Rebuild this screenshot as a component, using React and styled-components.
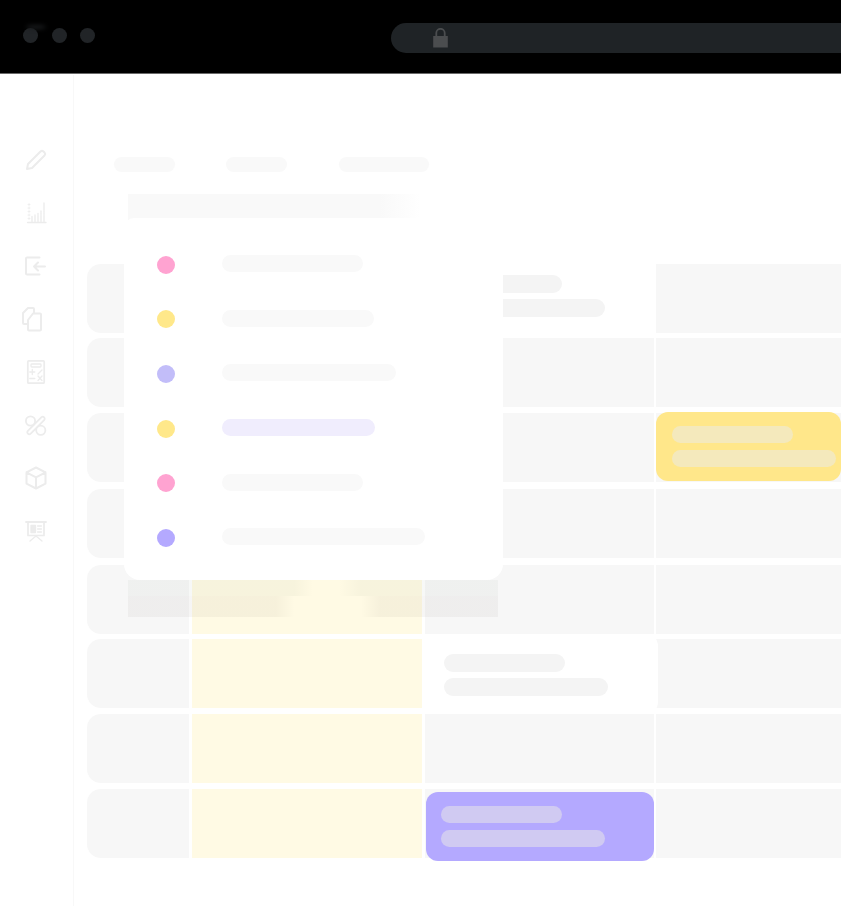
import styled, { createGlobalStyle } from 'styled-components';

const GlobalStyle = createGlobalStyle`
  html, body {
    margin: 0;
    padding: 0;
    background: #fff;
    font-family: 'Liberation Sans', Arial, sans-serif;
  }
`;

const rows = [
  [null, null, { tone: 'white', pos: 'row1' }, null],
  [null, null, null, null],
  [null, null, null, { tone: 'yellow', pos: 'yellow' }],
  [null, null, null, null],
  [null, null, null, null],
  [null, null, { tone: 'white', pos: 'row6' }, null],
  [null, null, null, null],
  [null, null, { tone: 'purple', pos: 'purple' }, null],
];

const menu = [
  { color: '#ffa3d1', width: 141 },
  { color: '#ffe88a', width: 152 },
  { color: '#c2bdf9', width: 174 },
  { color: '#ffe88a', width: 153, active: true },
  { color: '#ffa3d1', width: 141 },
  { color: '#b4a9ff', width: 203 },
];

export default function App() {
  return (
    <Page>
      <GlobalStyle />
      <Header>
        <Dots>
          <Dot />
          <Dot />
          <Dot />
        </Dots>
        <AddressBar>
          <svg width='15' height='20' viewBox='0 0 15 20'>
            <path
              d='M3.300 8.500V5a4.200 4.200 0 0 1 8.400 0v3.500'
              fill='none'
              stroke='#4b4d4f'
              strokeWidth='1.800'
            />
            <rect x='0.200' y='8' width='14.600' height='11.500' fill='#4b4d4f' />
          </svg>
        </AddressBar>
      </Header>
      <Body>
        <Sidebar>
          <Icon viewBox='0 0 24 24'>
            <path d='M3 21l1-5L16.500 3.500q1.500-1.300 3 0l1 1q1.300 1.500 0 3L8 20z' />
          </Icon>
          <Icon viewBox='0 0 24 24' $thin>
            <path d='M3.500 21.500h18.500M8 21v-5.500M11 21v-7M14 21v-8.500M17 21v-11M20 21V2' />
            <path d='M4 3.500h2M5 2.500v2M4 7h2M5 6v2M4 10.500h2M5 9.500v2M4 14h2M5 13v2M4 17.500h2M5 16.500v2' strokeWidth='.8' />
          </Icon>
          <Icon viewBox='0 0 24 24'>
            <path d='M15.500 3.500H3a1 1 0 0 0-1 1v15a1 1 0 0 0 1 1h12.500M21 12.500H10M14 8.500l-4 4 4 4' />
          </Icon>
          <Icon viewBox='0 0 24 24'>
            <path d='M4 17H0a1 1 0 0 1-1-1V6l5-5h5a1 1 0 0 1 1 1v4' />
            <path d='M5 23.500a1 1 0 0 1-1-1V13l5-6.500h7a1 1 0 0 1 1 1v15a1 1 0 0 1-1 1z' />
          </Icon>
          <Icon viewBox='0 0 24 24' $thin>
            <rect x='3.800' y='.8' width='16.400' height='22.400' rx='1' strokeWidth='1.700' />
            <rect x='7' y='4' width='10' height='3' rx='.8' />
            <path d='M5.800 12h5M8.300 9.500v5M14 14l4-4M5.800 18.500h5M14 16l4 4.500M18 16l-4 4.500' />
          </Icon>
          <Icon viewBox='0 0 24 24' $thin>
            <circle cx='6.500' cy='8' r='4.600' strokeWidth='1.800' />
            <circle cx='16.800' cy='17.300' r='4.600' strokeWidth='1.800' />
            <rect x='-11.500' y='-2' width='23' height='4' rx='2' transform='translate(12 12.500) rotate(-45)' strokeWidth='1.800' />
          </Icon>
          <Icon viewBox='0 0 24 24'>
            <path d='M12 1.500l9.500 4.800v11.400L12 22.500l-9.500-4.800V6.300zM2.500 6.300l9.500 5 9.500-5M12 11.300v11.200' />
          </Icon>
          <Icon viewBox='0 0 24 24' $thin>
            <path d='M2 3h20' strokeWidth='1.800' />
            <path d='M4 3v13.500h16V3' strokeWidth='1.700' />
            <rect x='7' y='6.500' width='4.500' height='7' fill='#ececec' />
            <path d='M13.500 7h4M13.500 10h4M13.500 13h4M12 17l-6 5M12 17l6 5' />
          </Icon>
        </Sidebar>
        <Main>
          <Tabs>
            <Tab $width={61} />
            <Tab $width={61} />
            <Tab $width={90} />
          </Tabs>
          <Schedule>
            {rows.map((row, r) =>
              row.map((card, c) => (
                <Cell key={`${r}-${c}`} $first={c === 0} $highlight={c === 1 && r > 3}>
                  {card && (
                    <EventCard $tone={card.tone} $pos={card.pos}>
                      <CardBar $tone={card.tone} $width={121} />
                      <CardBar $tone={card.tone} $width={164} />
                    </EventCard>
                  )}
                </Cell>
              ))
            )}
          </Schedule>
          <PopupShadow />
          <Popup>
            {menu.map((item, i) => (
              <PopupRow key={i}>
                <Marker $color={item.color} />
                <PopupBar $width={item.width} $active={item.active} />
              </PopupRow>
            ))}
          </Popup>
        </Main>
      </Body>
    </Page>
  );
}

const Page = styled.div`
  width: 841px;
  height: 906px;
  overflow: hidden;
  display: flex;
  flex-direction: column;
`;

const Header = styled.div`
  height: 74px;
  flex-shrink: 0;
  background: #000;
  border-bottom: 1px solid #6a6a6a;
  display: flex;
  align-items: flex-start;
  padding: 23px 0 0 23px;
  box-sizing: border-box;
`;

const Dots = styled.div`
  display: flex;
  gap: 13.5px;
  margin-top: 4.500px;
  width: 368px;
`;

const Dot = styled.div`
  position: relative;
  width: 15px;
  height: 15px;
  border-radius: 50%;
  background: #212427;
  &:first-child::before {
    content: '';
    position: absolute;
    left: 3px;
    top: -3px;
    width: 20px;
    height: 4px;
    border-radius: 50%;
    background: #1a1c1e;
    filter: blur(2px);
  }
`;

const AddressBar = styled.div`
  flex: 1;
  height: 30px;
  background: #1f2326;
  border-radius: 15px 0 0 15px;
  padding: 5px 0 0 42px;
  box-sizing: border-box;
  svg {
    display: block;
  }
`;

const Body = styled.div`
  flex: 1;
  display: flex;
  min-height: 0;
`;

const Sidebar = styled.div`
  width: 74px;
  flex-shrink: 0;
  box-sizing: border-box;
  border-right: 1px solid #f8f8f8;
  margin-top: 1px;
  padding: 73px 1px 0 0;
  display: flex;
  flex-direction: column;
  align-items: center;
  gap: 29px;
`;

const Icon = styled.svg`
  width: 24px;
  height: 24px;
  overflow: visible;
  fill: none;
  stroke: #ececec;
  stroke-width: ${(props) => (props.$thin ? 1.3 : 2)};
  stroke-linecap: round;
  stroke-linejoin: round;
`;

const Main = styled.div`
  position: relative;
  flex: 1;
  min-width: 0;
  padding: 83px 0 0 13px;
`;

const Tabs = styled.div`
  display: flex;
  gap: 51px;
  margin-left: 27px;
  & > :last-child {
    margin-left: 1px;
  }
`;

const Tab = styled.div`
  width: ${(props) => props.$width}px;
  height: 15px;
  border-radius: 8px;
  background: #f9f9f9;
`;

const Schedule = styled.div`
  margin-top: 92px;
  display: grid;
  grid-template-columns: 102px 230px 228px 1fr;
  grid-template-rows: 74px 75px 76px 76px 74px 75px 75px 69px;
  column-gap: 3px;
  & > :nth-child(4n + 3) {
    margin-right: -1px;
  }
`;

const Cell = styled.div`
  position: relative;
  height: 69px;
  background: ${(props) => (props.$highlight ? '#fffae4' : '#f7f7f7')};
  border-radius: ${(props) => (props.$first ? '14px 0 0 14px' : '0')};
`;

const cardTones = {
  white: '#fff',
  yellow: '#ffe78a',
  purple: '#b4a9ff',
};

const cardPos = {
  row1: 'top: 0; left: 0; right: -2px; height: 69px; padding: 11px 0 0 16px; border-radius: 0;',
  row6: 'top: -5px; left: -3px; right: -4px; height: 80px; padding: 20px 0 0 22px;',
  yellow: 'top: -1px; left: 0; right: 0; height: 69px; padding: 13.5px 0 0 16px;',
  purple: 'top: 3px; left: 0.5px; right: 0; height: 69px; padding: 13.5px 0 0 15.5px;',
};

const EventCard = styled.div`
  position: absolute;
  z-index: 1;
  box-sizing: border-box;
  display: flex;
  flex-direction: column;
  gap: 6.5px;
  border-radius: 12px;
  background: ${(props) => cardTones[props.$tone]};
  ${(props) => cardPos[props.$pos]}
`;

const barTones = {
  white: '#f4f4f4',
  yellow: '#f4e9bc',
  purple: '#d0caf2',
};

const CardBar = styled.div`
  width: ${(props) => props.$width}px;
  height: 17.5px;
  border-radius: 9px;
  background: ${(props) => barTones[props.$tone]};
`;

// soft shadow of the popup, visible as a band above and below it
const PopupShadow = styled.div`
  position: absolute;
  z-index: 2;
  left: 54px;
  top: 120px;
  width: 370px;
  height: 423px;
  background:
    linear-gradient(to right, #f9f9f9 68%, rgba(249, 249, 249, 0) 79%) top / 100% 26px no-repeat,
    linear-gradient(
        to right,
        rgba(0, 40, 0, 0.03) 45%,
        rgba(0, 40, 0, 0) 50%,
        rgba(0, 40, 0, 0) 57%,
        rgba(0, 40, 0, 0.03) 63%
      )
      left bottom 21px / 100% 16px no-repeat,
    linear-gradient(
        to right,
        rgba(30, 10, 0, 0.04) 40%,
        rgba(30, 10, 0, 0) 45%,
        rgba(30, 10, 0, 0) 63%,
        rgba(30, 10, 0, 0.04) 68%
      )
      bottom / 100% 21px no-repeat;
`;

const Popup = styled.div`
  position: absolute;
  z-index: 3;
  left: 50px;
  top: 144px;
  width: 379px;
  height: 362px;
  box-sizing: border-box;
  background: #fff;
  border-radius: 10px 10px 16px 16px;
  padding: 37.500px 0 0 33px;
  display: flex;
  flex-direction: column;
  gap: 36.700px;
`;

const PopupRow = styled.div`
  display: flex;
  align-items: center;
  gap: 47px;
  height: 18px;
`;

const Marker = styled.div`
  width: 18px;
  height: 18px;
  border-radius: 50%;
  background: ${(props) => props.$color};
`;

const PopupBar = styled.div`
  width: ${(props) => props.$width}px;
  height: 17px;
  margin-top: -2px;
  border-radius: 9px;
  background: ${(props) => (props.$active ? '#f0edfd' : '#f9f9f9')};
`;
